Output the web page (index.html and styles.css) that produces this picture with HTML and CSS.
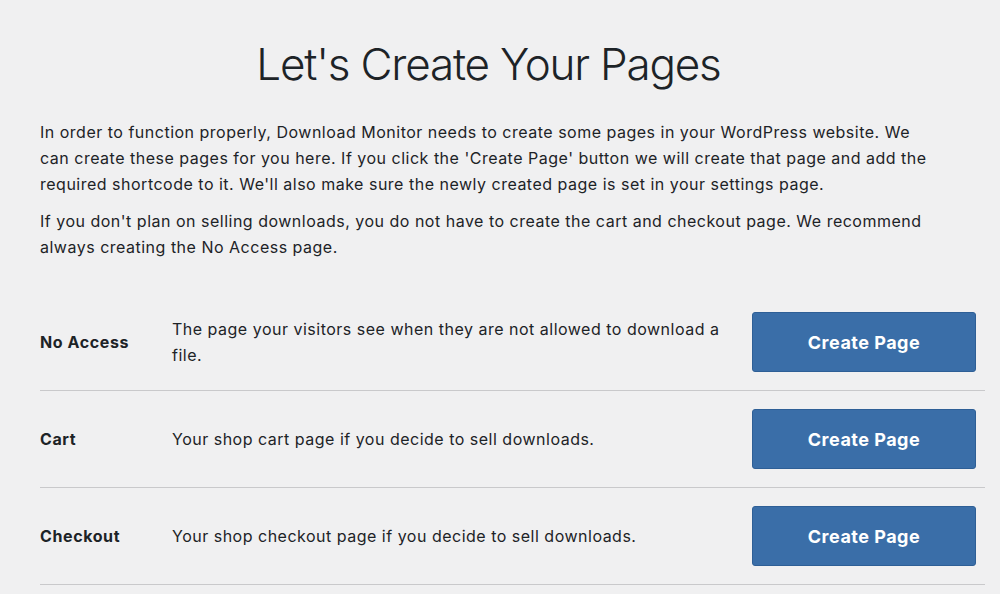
FILE: index.html
```html
<!DOCTYPE html>
<html lang="en">
<head>
  <meta charset="UTF-8">
  <title>Let's Create Your Pages</title>
  <link rel="stylesheet" href="styles.css">
</head>
<body>
  <div class="wrap">
    <h1>Let's Create Your Pages</h1>
    <p>In order to function properly, Download Monitor needs to create some pages in your WordPress website. We can create these pages for you here. If you click the 'Create Page' button we will create that page and add the required shortcode to it. We'll also make sure the newly created page is set in your settings page.</p>
    <p>If you don't plan on selling downloads, you do not have to create the cart and checkout page. We recommend always creating the No Access page.</p>

    <div class="pages">
      <div class="page-row">
        <div class="page-label">No Access</div>
        <div class="page-desc">The page your visitors see when they are not allowed to download a file.</div>
        <button class="btn">Create Page</button>
      </div>
      <div class="page-row">
        <div class="page-label">Cart</div>
        <div class="page-desc">Your shop cart page if you decide to sell downloads.</div>
        <button class="btn">Create Page</button>
      </div>
      <div class="page-row">
        <div class="page-label">Checkout</div>
        <div class="page-desc">Your shop checkout page if you decide to sell downloads.</div>
        <button class="btn">Create Page</button>
      </div>
    </div>
  </div>
</body>
</html>
```

FILE: styles.css
```css
body {
  margin: 0;
  background: #f0f0f1;
  color: #1d2327;
  font-family: Inter, "Liberation Sans", sans-serif;
  letter-spacing: 0.5px;
}
.wrap {
  width: 945px;
  margin-left: 40px;
}
h1 {
  margin: 0;
  padding: 36px 48px 0 0;
  text-align: center;
  font-size: 44px;
  font-weight: 300;
  line-height: 56px;
  letter-spacing: -1.2px;
}
p {
  max-width: 893px;
  margin: 0 0 11px;
  font-size: 16px;
  line-height: 26px;
}
.wrap h1 + p {
  margin-top: 27px;
}
.pages {
  margin-top: 34px;
}
.page-row {
  display: flex;
  align-items: center;
  padding: 18px 9px 18px 0;
  border-bottom: 1px solid #c9c9cb;
}
.page-label {
  width: 132px;
  flex-shrink: 0;
  font-size: 16px;
  font-weight: 700;
  letter-spacing: 0.6px;
}
.page-desc {
  flex: 1;
  font-size: 16px;
  line-height: 26px;
  padding-right: 30px;
}
.btn {
  width: 224px;
  height: 60px;
  flex-shrink: 0;
  background: #3a6ea8;
  border: 1px solid #2e5f96;
  border-radius: 3px;
  color: #fff;
  font-family: Inter, "Liberation Sans", sans-serif;
  font-size: 18px;
  font-weight: 700;
  letter-spacing: 0.5px;
  cursor: pointer;
}
```
